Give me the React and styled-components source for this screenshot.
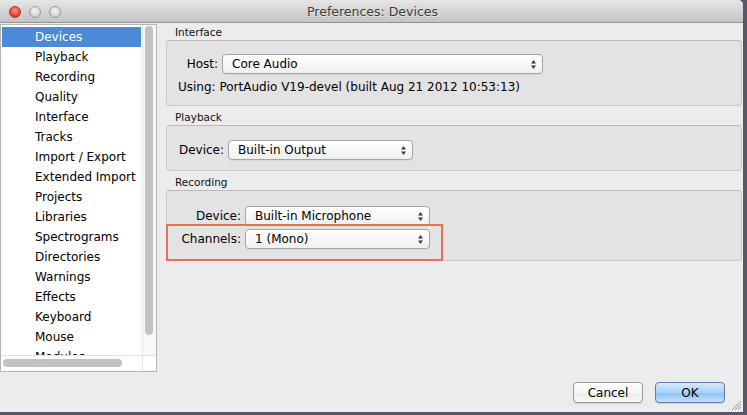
import React from "react";
import styled, { createGlobalStyle } from "styled-components";

const GlobalStyle = createGlobalStyle`
  html, body {
    margin: 0;
    padding: 0;
    background: #57566a;
  }
  body {
    width: 747px;
    height: 415px;
    overflow: hidden;
    font-family: "DejaVu Sans", "Liberation Sans", sans-serif;
    font-size: 12px;
    color: #000;
  }
`;

const Window = styled.div`
  position: relative;
  width: 743px;
  height: 412px;
  background: #ececec;
  border-top-right-radius: 5px;
  display: flex;
  flex-direction: column;
  overflow: hidden;
`;

const TitleBar = styled.div`
  flex: none;
  height: 22px;
  display: grid;
  grid-template-columns: 1fr auto 1fr;
  align-items: center;
  background: linear-gradient(#e6e6e6, #c3c3c3);
  border-bottom: 1px solid #929292;
`;

const Lights = styled.div`
  display: flex;
  gap: 8px;
  padding-left: 9px;
  padding-top: 1px;
`;

const Light = styled.span`
  width: 12px;
  height: 12px;
  box-sizing: border-box;
  border-radius: 50%;
  border: 1px solid ${({ $red }) => ($red ? "#a8372c" : "#9d9d9d")};
  background: ${({ $red }) =>
    $red
      ? "radial-gradient(circle at 50% 35%, #ff9a8c 0%, #ea4a3c 55%, #c5291d 100%)"
      : "radial-gradient(circle at 50% 35%, #f4f4f4 0%, #d6d6d6 60%, #bcbcbc 100%)"};
`;

const Title = styled.div`
  font-size: 12.5px;
  color: #3c3c3c;
  text-shadow: 0 1px 0 rgba(255, 255, 255, 0.5);
  padding-left: 2px;
`;

const Content = styled.div`
  flex: none;
  display: flex;
  gap: 9px;
  height: 349px;
  padding-top: 1px;
  box-sizing: border-box;
  margin-right: 1px;
`;

const Sidebar = styled.div`
  flex: none;
  width: 157px;
  height: 348px;
  box-sizing: border-box;
  border: 1px solid #b4b4b4;
  background: #fff;
  display: grid;
  grid-template-columns: 1fr 14px;
  grid-template-rows: 1fr 16px;
`;

const List = styled.div`
  overflow: hidden;
  padding-top: 2px;
`;

const Item = styled.div`
  height: 20px;
  line-height: 20px;
  margin: 0 1px;
  padding-left: 33px;
  white-space: nowrap;
  background: ${({ $selected }) => ($selected ? "#4a8ad9" : "transparent")};
  color: ${({ $selected }) => ($selected ? "#fff" : "#000")};
`;

const VTrack = styled.div`
  border-left: 1px solid #e6e6e6;
  background: #f8f8f8;
  padding: 1px 0 0 2px;
`;

const VThumb = styled.div`
  width: 8px;
  height: 309px;
  border-radius: 4px;
  background: #c2c2c2;
`;

const HTrack = styled.div`
  border-top: 1px solid #e4e4e4;
  padding: 3px 0 0 2px;
`;

const HThumb = styled.div`
  width: 119px;
  height: 8px;
  border-radius: 4px;
  background: #c2c2c2;
`;

const Corner = styled.div`
  border-top: 1px solid #e4e4e4;
  border-left: 1px solid #e4e4e4;
`;

const Main = styled.div`
  flex: 1;
  display: flex;
  flex-direction: column;
  gap: 3px;
`;

const Section = styled.section`
  display: flex;
  flex-direction: column;
`;

const GroupLabel = styled.div`
  font-size: 10.5px;
  line-height: 15px;
  padding: 1px 0 0 9px;
  color: #111;
`;

const GroupBox = styled.div`
  position: relative;
  border: 1px solid #c9c9c9;
  border-top-color: #bababa;
  border-radius: 4px;
  background: #e3e3e3;
  padding: ${({ $pad }) => $pad};
`;

const FormRows = styled.div`
  display: flex;
  flex-direction: column;
  gap: 3px;
`;

const FormRow = styled.div`
  display: grid;
  grid-template-columns: ${({ $labelWidth }) => $labelWidth}px auto;
  column-gap: 4px;
  align-items: center;
  justify-content: start;
`;

const FieldLabel = styled.label`
  text-align: right;
  white-space: nowrap;
`;

const SelectBox = styled.div`
  width: ${({ $width }) => $width}px;
  height: 20px;
  box-sizing: border-box;
  border: 1px solid #a4a4a4;
  border-radius: 4px;
  background: linear-gradient(#ffffff, #f0f0f0);
  box-shadow: 0 1px 0 rgba(0, 0, 0, 0.05);
  display: flex;
  align-items: center;
  justify-content: space-between;
  padding: 0 6px 0 9px;
  white-space: nowrap;
`;

const InfoLine = styled.div`
  margin-top: 5px;
  line-height: 16px;
  white-space: nowrap;
`;

const Highlight = styled.div`
  position: absolute;
  left: -1px;
  top: 33px;
  bottom: -1px;
  width: 277px;
  box-sizing: border-box;
  border: 2px solid #e66f5c;
  pointer-events: none;
`;

const Footer = styled.div`
  flex: 1;
  display: flex;
  justify-content: flex-end;
  align-items: flex-start;
  gap: 12px;
  padding: 10px 18px 0 0;
`;

const Button = styled.button`
  width: 70px;
  height: 21px;
  box-sizing: border-box;
  border-radius: 4px;
  font-family: inherit;
  font-size: 12px;
  color: #000;
  padding: 0;
  border: 1px solid ${({ $primary }) => ($primary ? "#5b7fae" : "#9b9b9b")};
  background: ${({ $primary }) =>
    $primary
      ? "linear-gradient(#d6e9fb 0%, #a9d1f6 50%, #8ec3f3 55%, #c3e2fb 100%)"
      : "linear-gradient(#ffffff 0%, #f6f6f6 50%, #ececec 55%, #f8f8f8 100%)"};
  box-shadow: 0 1px 1px rgba(0, 0, 0, 0.12);
`;

const Grip = styled.svg`
  position: absolute;
  right: 2px;
  bottom: 2px;
`;

const Arrows = () => (
  <svg width="5" height="9" viewBox="0 0 5 9">
    <polygon points="0,3.5 2.5,0 5,3.5" fill="#3d3d3d" />
    <polygon points="0,5.5 2.5,9 5,5.5" fill="#3d3d3d" />
  </svg>
);

const Select = ({ value, width }) => (
  <SelectBox $width={width}>
    <span>{value}</span>
    <Arrows />
  </SelectBox>
);

const pages = [
  "Devices",
  "Playback",
  "Recording",
  "Quality",
  "Interface",
  "Tracks",
  "Import / Export",
  "Extended Import",
  "Projects",
  "Libraries",
  "Spectrograms",
  "Directories",
  "Warnings",
  "Effects",
  "Keyboard",
  "Mouse",
  "Modules",
];

const App = () => {
  return (
    <>
      <GlobalStyle />
      <Window>
        <TitleBar>
          <Lights>
            <Light $red />
            <Light />
            <Light />
          </Lights>
          <Title>Preferences: Devices</Title>
          <span />
        </TitleBar>

        <Content>
          <Sidebar>
            <List>
              {pages.map((p, i) => (
                <Item key={p} $selected={i === 0}>
                  {p}
                </Item>
              ))}
            </List>
            <VTrack>
              <VThumb />
            </VTrack>
            <HTrack>
              <HThumb />
            </HTrack>
            <Corner />
          </Sidebar>

          <Main>
            <Section>
              <GroupLabel>Interface</GroupLabel>
              <GroupBox $pad="13px 11px 10px">
                <FormRow $labelWidth={40}>
                  <FieldLabel>Host:</FieldLabel>
                  <Select value="Core Audio" width={321} />
                </FormRow>
                <InfoLine>Using: PortAudio V19-devel (built Aug 21 2012 10:53:13)</InfoLine>
              </GroupBox>
            </Section>

            <Section>
              <GroupLabel>Playback</GroupLabel>
              <GroupBox $pad="14px 11px 10px">
                <FormRow $labelWidth={46}>
                  <FieldLabel>Device:</FieldLabel>
                  <Select value="Built-in Output" width={185} />
                </FormRow>
              </GroupBox>
            </Section>

            <Section>
              <GroupLabel>Recording</GroupLabel>
              <GroupBox $pad="15px 11px 11px">
                <FormRows>
                  <FormRow $labelWidth={63}>
                    <FieldLabel>Device:</FieldLabel>
                    <Select value="Built-in Microphone" width={185} />
                  </FormRow>
                  <FormRow $labelWidth={63}>
                    <FieldLabel>Channels:</FieldLabel>
                    <Select value="1 (Mono)" width={185} />
                  </FormRow>
                </FormRows>
                <Highlight />
              </GroupBox>
            </Section>
          </Main>
        </Content>

        <Footer>
          <Button>Cancel</Button>
          <Button $primary>OK</Button>
        </Footer>

        <Grip width="10" height="10" viewBox="0 0 10 10">
          <line x1="1" y1="10" x2="10" y2="1" stroke="#9a9a9a" strokeWidth="1" />
          <line x1="4" y1="10" x2="10" y2="4" stroke="#9a9a9a" strokeWidth="1" />
          <line x1="7" y1="10" x2="10" y2="7" stroke="#9a9a9a" strokeWidth="1" />
        </Grip>
      </Window>
    </>
  );
};

export default App;
